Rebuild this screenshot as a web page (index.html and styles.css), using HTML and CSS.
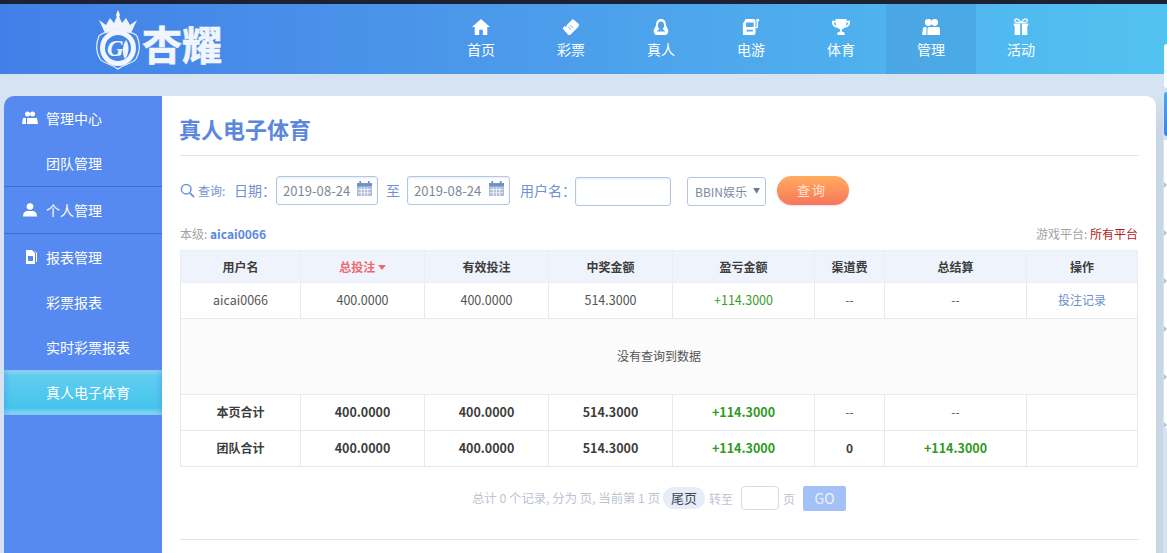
FILE: index.html
```html
<!DOCTYPE html>
<html lang="zh-CN">
<head>
<meta charset="utf-8">
<title>真人电子体育</title>
<link rel="stylesheet" href="styles.css">
</head>
<body>
<div class="topline"></div>
<header class="header">
  <a class="logo">
    <svg class="logo-mark" viewBox="0 0 44 60" width="44" height="60">
      <path d="M2 10 L9 15 L13 8 L17 13 L21 4 L25 13 L29 8 L33 15 L40 10 L34 23 Q21 18 8 23 Z" fill="#eef4fc"/>
      <path d="M21 0 L23 5 L21 9 L19 5 Z" fill="#fff"/>
      <path d="M21 19 C27 23 36 21 40 26 C43 33 43 42 39 49 C35 54 27 54 21 59 C15 54 7 54 3 49 C-1 42 -1 33 2 26 C6 21 15 23 21 19 Z" fill="none" stroke="#e8f0fb" stroke-width="1.200"/>
      <circle cx="21" cy="38" r="15.500" fill="none" stroke="#f2f6fd" stroke-width="5"/>
      <path d="M29 30 C33 35 32 44 28 49 C25 44 25 36 29 30 Z" fill="#eef4fc"/>
      <text x="10" y="46" class="logo-g">G</text>
    </svg>
    <span class="logo-text">杏耀</span>
  </a>
  <nav class="nav">
    <a class="nav-item">
      <svg class="nav-icon" viewBox="0 0 20 20"><path d="M10 1 L20 10 L17 10 L17 19 L12 19 L12 13 L8 13 L8 19 L3 19 L3 10 L0 10 Z"/></svg>
      <span>首页</span>
    </a>
    <a class="nav-item">
      <svg class="nav-icon" viewBox="0 0 20 20"><path d="M12 1 L19 7 L18 10 L9 19 L7 19 L1 12 L1 11 L3 9 L5 10 L5 8 Z"/><path d="M9 8 L12 11 M7 10 L10 13" stroke="#9bc8f0" stroke-width="1.300"/></svg>
      <span>彩票</span>
    </a>
    <a class="nav-item">
      <svg class="nav-icon" viewBox="0 0 20 20"><path fill-rule="evenodd" d="M10 1 C14 1 15.500 4 15.500 8 L18 13 C18.500 16 17 19 14 19 L6 19 C3 19 1.500 16 2 13 L4.500 8 C4.500 4 6 1 10 1 Z M10 4 C7.500 4 6.500 6 6.500 8.500 C6.500 10 7.500 11.500 8.500 12 L5 15 L15 15 L11.500 12 C12.500 11.500 13.500 10 13.500 8.500 C13.500 6 12.500 4 10 4 Z"/><path d="M4 17 L16 17" stroke="#fff" stroke-width="2"/></svg>
      <span>真人</span>
    </a>
    <a class="nav-item">
      <svg class="nav-icon" viewBox="0 0 20 20"><path fill-rule="evenodd" d="M3 3 Q3 1 5 1 L13 1 Q15 1 15 3 L15 17 Q15 19 13 19 L1 19 L1 6 Z M4.500 5 L4.500 10 L13 10 L13 5 Z M5 13 L5 15 L12 15 L12 13 Z"/><path d="M17 3 L17 10 L15 11" fill="none" stroke="#fff" stroke-width="1.600"/><circle cx="17.500" cy="2.500" r="1.600"/></svg>
      <span>电游</span>
    </a>
    <a class="nav-item">
      <svg class="nav-icon" viewBox="0 0 20 20"><path d="M4 1 L16 1 L16 3 L20 3 L20 6 Q19 10 14.500 10.500 Q13 12 11 12.500 L11 15 L14 16 L14 19 L6 19 L6 16 L9 15 L9 12.500 Q7 12 5.500 10.500 Q1 10 0 6 L0 3 L4 3 Z M2 5 Q2.500 8 4.500 8.500 L4 5 Z M18 5 L16 5 L15.500 8.500 Q17.500 8 18 5 Z" fill-rule="evenodd"/></svg>
      <span>体育</span>
    </a>
    <a class="nav-item is-active">
      <svg class="nav-icon nav-icon-wide" viewBox="0 0 20 20"><circle cx="7" cy="5" r="3.800"/><circle cx="14" cy="5" r="3.800"/><path d="M0 19 L1 12 Q1 10 3 10 L5 10 L5 19 Z M6 19 L6 12 Q6 10 8 10 L18 10 Q20 10 20 12 L20 19 Z"/></svg>
      <span>管理</span>
    </a>
    <a class="nav-item">
      <svg class="nav-icon" viewBox="0 0 20 20"><path d="M2 6 L9 6 L9 19 L3 19 L3 9 L2 9 Z M11 6 L18 6 L18 9 L17 9 L17 19 L11 19 Z"/><path d="M10 5 C7 0 3 0 3 3 C3 5 7 5 10 5 C13 5 17 5 17 3 C17 0 13 0 10 5 Z" fill="none" stroke="#fff" stroke-width="1.400"/></svg>
      <span>活动</span>
    </a>
  </nav>
</header>

<main class="main">
  <aside class="sidebar">
    <div class="side-group">
      <a class="side-row">
        <svg class="side-icon" viewBox="0 0 16 14"><circle cx="5.500" cy="3" r="2.500"/><circle cx="10.500" cy="3" r="2.500"/><path d="M0 13 L1 7 L4 7 L4 13 Z M5 13 L5 7 L15 7 L16 13 Z"/></svg>
        <span>管理中心</span>
      </a>
      <a class="side-row side-sub">团队管理</a>
    </div>
    <div class="side-group">
      <a class="side-row">
        <svg class="side-icon" viewBox="0 0 16 14"><circle cx="8" cy="3.500" r="3.300"/><path d="M1 13.500 Q1 8.500 5 8 L11 8 Q15 8.500 15 13.500 Z"/></svg>
        <span>个人管理</span>
      </a>
    </div>
    <div class="side-group">
      <a class="side-row">
        <svg class="side-icon side-icon-doc" viewBox="0 0 14 16"><path fill-rule="evenodd" d="M3 1 L9 1 L12 4 L12 15 L3 15 Z M5 7 L5 12 L10 12 L10 7 Z"/><path d="M11 1 L14 4 L14 13 L13 13 L13 4 Z"/></svg>
        <span>报表管理</span>
      </a>
      <a class="side-row side-sub">彩票报表</a>
      <a class="side-row side-sub">实时彩票报表</a>
      <a class="side-row side-sub is-current">真人电子体育</a>
    </div>
  </aside>

  <section class="card">
    <h1 class="title">真人电子体育</h1>

    <form class="filter">
      <svg class="search-icon" viewBox="0 0 15 15" width="15" height="15"><circle cx="6.200" cy="6.200" r="4.800" fill="none" stroke="#6c97d8" stroke-width="1.500"/><path d="M9.800 9.800 L14 14" stroke="#6c97d8" stroke-width="1.800"/></svg>
      <span class="filter-hint">查询:</span>
      <label class="filter-label filter-date">日期：</label>
      <span class="date-box">
        <input class="field field-date" value="2019-08-24">
        <svg class="cal-icon" viewBox="0 0 14 14" width="15" height="15"><path d="M0 2 L14 2 L14 14 L0 14 Z" fill="#aebfdc"/><path d="M0 2 L14 2 L14 5 L0 5 Z" fill="#6f8fc6"/><path d="M3 0 L3 3 M11 0 L11 3" stroke="#6f8fc6" stroke-width="1.600"/><path d="M1 8 L13 8 M1 11 L13 11 M4 6 L4 14 M7 6 L7 14 M10 6 L10 14" stroke="#fff" stroke-width=".7"/></svg>
      </span>
      <span class="filter-label filter-to">至</span>
      <span class="date-box date-box-end">
        <input class="field field-date" value="2019-08-24">
        <svg class="cal-icon" viewBox="0 0 14 14" width="15" height="15"><path d="M0 2 L14 2 L14 14 L0 14 Z" fill="#aebfdc"/><path d="M0 2 L14 2 L14 5 L0 5 Z" fill="#6f8fc6"/><path d="M3 0 L3 3 M11 0 L11 3" stroke="#6f8fc6" stroke-width="1.600"/><path d="M1 8 L13 8 M1 11 L13 11 M4 6 L4 14 M7 6 L7 14 M10 6 L10 14" stroke="#fff" stroke-width=".7"/></svg>
      </span>
      <label class="filter-label filter-user">用户名：</label>
      <input class="field field-user">
      <span class="select-box">BBIN娱乐</span>
      <button class="query-btn" type="button">查询</button>
    </form>

    <div class="meta">
      <span class="meta-key">本级: <b class="meta-user">aicai0066</b></span>
      <span class="meta-key">游戏平台: <em class="meta-all">所有平台</em></span>
    </div>

    <table class="report">
      <colgroup>
        <col class="c-user"><col class="c-num"><col class="c-num"><col class="c-num"><col class="c-win"><col class="c-fee"><col class="c-win"><col class="c-op">
      </colgroup>
      <thead>
        <tr>
          <th>用户名</th>
          <th class="is-sorted">总投注 <i class="sort-arrow"></i></th>
          <th>有效投注</th>
          <th>中奖金额</th>
          <th>盈亏金额</th>
          <th>渠道费</th>
          <th>总结算</th>
          <th>操作</th>
        </tr>
      </thead>
      <tbody>
        <tr>
          <td class="num">aicai0066</td><td class="num">400.0000</td><td class="num">400.0000</td><td class="num">514.3000</td>
          <td class="num gain">+114.3000</td><td>--</td><td>--</td><td><a class="link">投注记录</a></td>
        </tr>
        <tr class="empty"><td colspan="8">没有查询到数据</td></tr>
        <tr class="total">
          <td>本页合计</td><td class="num">400.0000</td><td class="num">400.0000</td><td class="num">514.3000</td>
          <td class="num gain">+114.3000</td><td class="plain">--</td><td class="plain">--</td><td></td>
        </tr>
        <tr class="total">
          <td>团队合计</td><td class="num">400.0000</td><td class="num">400.0000</td><td class="num">514.3000</td>
          <td class="num gain">+114.3000</td><td>0</td><td class="num gain">+114.3000</td><td></td>
        </tr>
      </tbody>
    </table>

    <div class="pager">
      <span class="pager-summary">总计 0 个记录, 分为 页, 当前第 1 页</span>
      <a class="pager-last">尾页</a>
      <span>转至</span>
      <input class="pager-input">
      <span>页</span>
      <button class="pager-go" type="button">GO</button>
    </div>
    <div class="bottom-rule"></div>
  </section>
  <div class="card-edge"></div>
</main>

<div class="float-rail">
  <div class="rail-item rail-top"></div>
  <div class="rail-item rail-on"></div>
  <div class="rail-item"></div>
  <div class="rail-item"></div>
  <div class="rail-item"></div>
  <div class="rail-item"></div>
  <div class="rail-item"></div>
  <div class="rail-item"></div>
</div>
</body>
</html>
```
FILE: styles.css
```css
* { box-sizing: border-box; }
html, body { margin: 0; height: 100%; overflow: hidden; }
body {
  font-family: "Noto Sans CJK SC", "Noto Sans", sans-serif;
  font-size: 12px;
  color: #444;
  background: #d5e3f2;
}
.topline { height: 4px; background: #1c2233; }
.header {
  height: 70px;
  display: flex;
  background: linear-gradient(90deg, #437fe8 0%, #4b98ea 40%, #52c3f1 100%);
}
.logo { display: flex; align-items: flex-start; margin-left: 97px; width: 125px; color: #f1f5fc; }
.logo-mark { fill: #eef4fc; margin-top: 6px; flex: none; overflow: visible; }
.logo-g { font: italic bold 23px "Liberation Serif", serif; fill: #f4f8fe; }
.logo-text {
  font-size: 40px;
  font-weight: 700;
  line-height: 40px;
  margin: 19px 0 0 1px;
  white-space: nowrap;
  -webkit-text-stroke: .7px #f1f5fc;
}
.nav { display: flex; margin-left: 214px; }
.nav-item {
  width: 90px;
  display: flex;
  flex-direction: column;
  align-items: center;
  color: #fff;
  font-size: 14px;
  line-height: 20px;
  padding-top: 14px;
}
.nav-item.is-active { background: rgba(60, 130, 200, .25); }
.nav-icon { width: 18px; height: 18px; fill: #fff; margin-bottom: 3px; flex: none; }
.nav-icon-wide { width: 20px; }

.main { display: flex; padding: 22px 0 0 4px; height: 479px; }
.sidebar {
  width: 158px;
  flex: none;
  background: #568af0;
  border-radius: 10px 0 0 0;
  color: #fff;
  font-size: 14px;
}
.side-group { border-bottom: 1px solid #3a6ed6; }
.side-group:last-child { border-bottom: 0; }
.side-row {
  height: 45px;
  display: flex;
  align-items: center;
  padding-left: 18px;
  padding-bottom: 2px;
}
.side-group + .side-group .side-row:first-child { height: 46px; padding-bottom: 0; }
.side-sub { padding-left: 42px; }
.side-icon { width: 16px; height: 14px; fill: #fff; margin-right: 8px; flex: none; }
.side-icon-doc { height: 16px; }
.side-row.is-current {
  background: linear-gradient(180deg, #a5e4f8 0, #62cdf0 5px, #45c4ec 38px, #93dff5 44px);
  box-shadow: inset 3px 0 4px rgba(86, 138, 240, .35), inset -3px 0 4px rgba(86, 138, 240, .35);
}

.card {
  width: 994px;
  flex: none;
  background: #fff;
  border-radius: 0 10px 0 0;
  padding: 0 17px 0 18px;
}
.card-edge { width: 7px; flex: none; background: linear-gradient(180deg, #d5e3f2 0, #c9d6e3 30px); }
.title {
  margin: 0;
  height: 60px;
  line-height: 64px;
  font-size: 22px;
  font-weight: 700;
  color: #5b87dc;
  text-indent: -1px;
  border-bottom: 1px solid #e3e5e8;
}
.filter {
  display: flex;
  align-items: center;
  height: 30px;
  margin-top: 19px;
  color: #6f93cf;
  font-size: 14px;
}
.search-icon { flex: none; }
.filter-hint { font-size: 12px; margin-left: 3px; width: 36px; }
.filter-label { white-space: nowrap; }
.filter-date { width: 42px; font-family: "Noto Sans CJK TC", sans-serif; }
.filter-to { margin: 0 8px 0 8px; width: 13px; }
.filter-user { margin-left: 10px; width: 55px; font-family: "Noto Sans CJK TC", sans-serif; }
.date-box { position: relative; display: block; width: 102px; height: 29px; flex: none; }
.date-box-end { width: 103px; }
.field {
  height: 29px;
  border: 1px solid #b3c7e4;
  border-radius: 3px;
  background: #fff;
  font: inherit;
  color: #7f8794;
  outline: 0;
  box-shadow: inset 0 1px 2px rgba(150, 175, 215, .25);
}
.field-date { width: 100%; font-size: 13px; padding: 0 0 0 6px; letter-spacing: .05px; }
.field-user { width: 96px; margin-top: 2px; flex: none; }
.cal-icon { position: absolute; right: 6px; top: 5px; }
.select-box {
  position: relative;
  width: 79px;
  height: 29px;
  margin: 2px 0 0 16px;
  border: 1px solid #b3c7e4;
  border-radius: 3px;
  font-size: 12px;
  line-height: 27px;
  padding-left: 7px;
  color: #7c8aa3;
  flex: none;
}
.select-box::after {
  content: "▼";
  position: absolute;
  right: 5px;
  top: -1px;
  font-size: 7px;
  color: #6d7a8e;
}
.query-btn {
  width: 72px;
  height: 29px;
  margin-left: 11px;
  padding: 0 2px 2px 0;
  border: 0;
  border-radius: 15px;
  background: linear-gradient(180deg, #ffac5e, #f8765c);
  color: #ffe3d2;
  font: inherit;
  font-size: 13px;
  letter-spacing: 2px;
  box-shadow: 0 1px 2px rgba(200, 200, 220, .5);
}
.meta {
  display: flex;
  justify-content: space-between;
  align-items: center;
  height: 16px;
  margin-top: 20px;
  padding-right: 1px;
  font-size: 12px;
}
.meta-key { color: #a3a3a3; }
.meta-user { color: #5b87dc; font-weight: 700; }
.meta-all { color: #b21c1c; font-style: normal; }

.report {
  width: 957px;
  table-layout: fixed;
  border-collapse: collapse;
  margin-top: 9px;
  font-size: 12px;
  color: #555;
}
.c-user { width: 120px; }
.c-num { width: 124px; }
.c-win { width: 142px; }
.c-fee { width: 70px; }
.c-op { width: 111px; }
.report th, .report td {
  border: 1px solid #e7e9ee;
  padding: 0;
  text-align: center;
  white-space: nowrap;
}
.report th {
  height: 32px;
  background: #eff3fb;
  color: #3d3d3d;
  font-weight: 700;
  border-color: #e9edf6;
}
.report td { height: 36px; padding-bottom: 2px; }
.report td.num { font-size: 12.5px; }
.is-sorted { color: #ee6a72 !important; }
.sort-arrow {
  display: inline-block;
  border: 4px solid transparent;
  border-top: 5px solid #ee6a72;
  border-bottom: 0;
  vertical-align: 2px;
}
.report .gain { color: #3b9c2b; }
.link { color: #6d90cc; }
.empty td { height: 76px; background: #fbfbfb; color: #555; }
.total td { font-weight: 700; color: #3d3d3d; }
.total .gain { color: #2f9a1f; }
.total .plain { font-weight: 400; color: #555; }

.pager {
  display: flex;
  align-items: center;
  height: 26px;
  margin-top: 18px;
  padding-left: 292px;
  color: #bcc4d2;
  font-size: 12px;
}
.pager-summary { font-size: 12.35px; }
.pager-last {
  width: 42px;
  height: 22px;
  margin: 0 4px 0 3px;
  line-height: 22px;
  text-align: center;
  border-radius: 11px;
  background: #e8ecf6;
  color: #40465a;
  font-size: 13px;
}
.pager-input {
  width: 38px;
  height: 24px;
  margin: 0 4px 0 8px;
  border: 1px solid #d7dbe3;
  border-radius: 4px;
  background: #fff;
  outline: 0;
}
.pager-go {
  width: 43px;
  height: 25px;
  margin-left: 8px;
  padding: 0;
  border: 0;
  border-radius: 2px;
  background: #a3c1f6;
  color: #eef3fd;
  font: inherit;
  font-size: 14px;
}
.bottom-rule { margin-top: 28px; border-top: 1px solid #e3e5e8; }

.float-rail {
  position: absolute;
  left: 1164px;
  top: 44px;
  width: 3px;
  display: flex;
  flex-direction: column;
}
.rail-item { height: 48px; background: #fff; position: relative; }
.rail-top { height: 44px; margin-bottom: 4px; border-radius: 3px 0 0 3px; }
.rail-on { height: 44px; margin-bottom: 4px; border-radius: 3px 0 0 3px; background: linear-gradient(180deg, #4fa8e6, #437fe8); }
.rail-item:nth-child(n+3)::after {
  content: "";
  position: absolute;
  left: 0;
  top: 42px;
  border: 3px solid transparent;
  border-left: 3px solid #b4c2d0;
}
```
